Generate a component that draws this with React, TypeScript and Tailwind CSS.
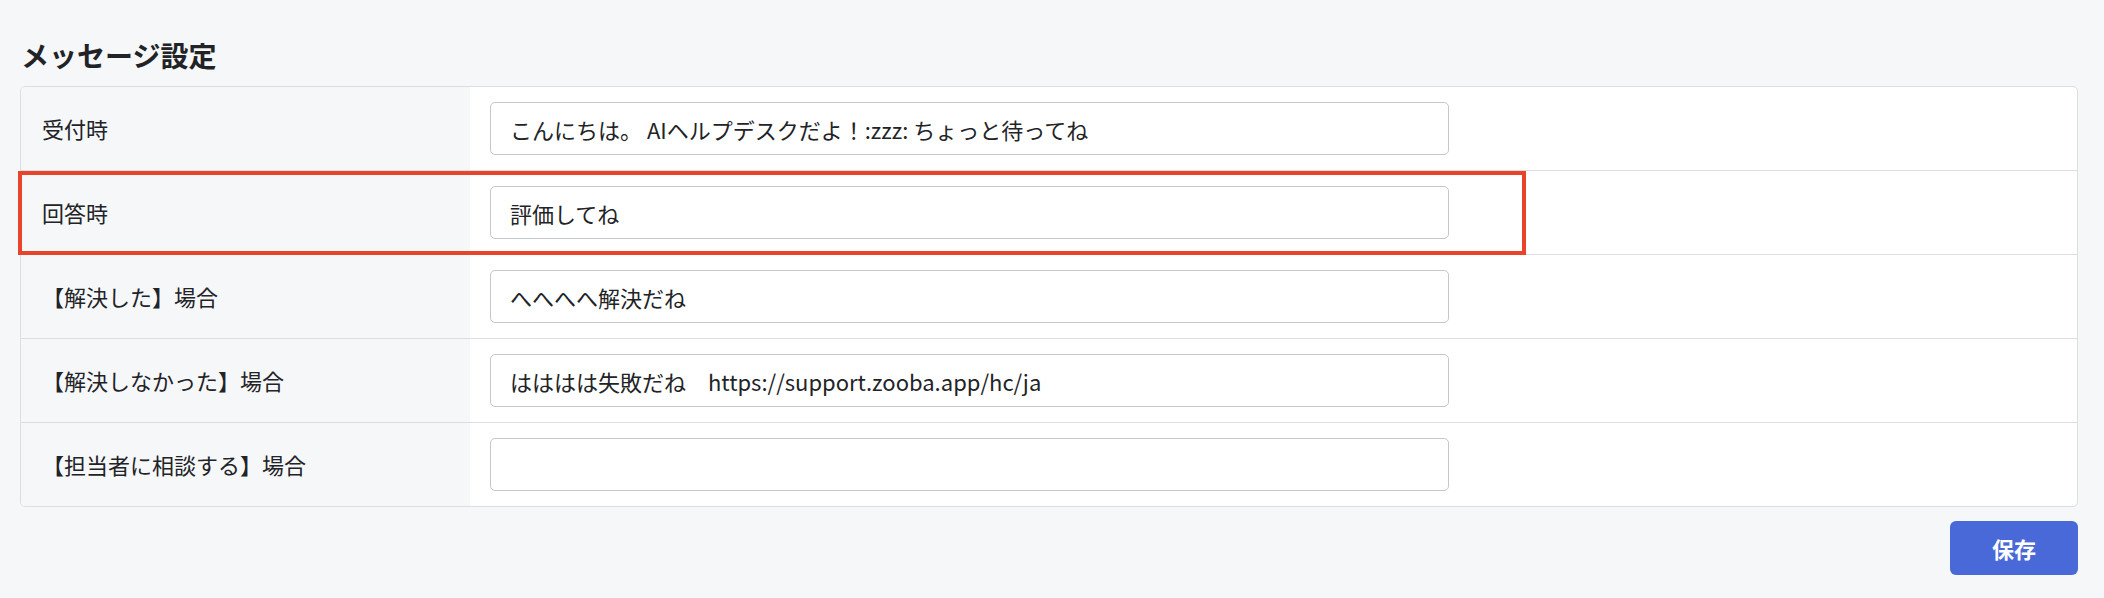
import React from 'react';

const rows = [
    { label: '受付時', value: 'こんにちは。 AIヘルプデスクだよ！:zzz: ちょっと待ってね' },
    { label: '回答時', value: '評価してね', highlight: true },
    { label: '【解決した】場合', value: 'へへへへ解決だね' },
    { label: '【解決しなかった】場合', value: 'はははは失敗だね　https://support.zooba.app/hc/ja' },
    { label: '【担当者に相談する】場合', value: '' },
];

const App = () => {
    return (
        <div
            className="min-h-screen bg-[#f6f7f9] pl-[20px] pr-[26px] pt-[36px] text-[#222326]"
            style={{ fontFamily: '"Noto Sans CJK JP", "Noto Sans", sans-serif' }}
        >
            <h1 className="mb-[11px] pl-[1px] text-[28px] font-bold leading-[39px]">メッセージ設定</h1>

            <div className="rounded-[5px] border border-[#dcdee4] bg-white">
                {rows.map((row, i) => (
                    <div
                        key={row.label}
                        className={
                            'relative flex ' + (i < rows.length - 1 ? 'border-b border-[#dcdee4]' : '')
                        }
                    >
                        <div
                            className={
                                'flex w-[449px] items-center bg-[#f6f7f9] pl-[21px] text-[22px] ' +
                                (i === 0 ? 'rounded-tl-[4px] ' : '') +
                                (i === rows.length - 1 ? 'rounded-bl-[4px]' : '')
                            }
                        >
                            {row.label}
                        </div>
                        <div className="py-[15px] pl-[20px]">
                            <input
                                type="text"
                                defaultValue={row.value}
                                className="h-[53px] w-[959px] rounded-[5px] border border-[#c4c6d0] bg-white px-[19px] text-[22px] text-[#222326] outline-none"
                                style={{ fontFamily: '"Noto Sans CJK JP", "Noto Sans", sans-serif' }}
                            />
                        </div>
                        {row.highlight && (
                            <div className="pointer-events-none absolute top-0 bottom-[-1px] left-[-3px] w-[1508px] border-4 border-[#e8442b]" />
                        )}
                    </div>
                ))}
            </div>

            <div className="mt-[14px] flex justify-end">
                <button className="h-[54px] w-[128px] rounded-[6px] bg-[#4a69d9] text-[22px] font-bold text-white">
                    保存
                </button>
            </div>
        </div>
    );
};

export default App;
